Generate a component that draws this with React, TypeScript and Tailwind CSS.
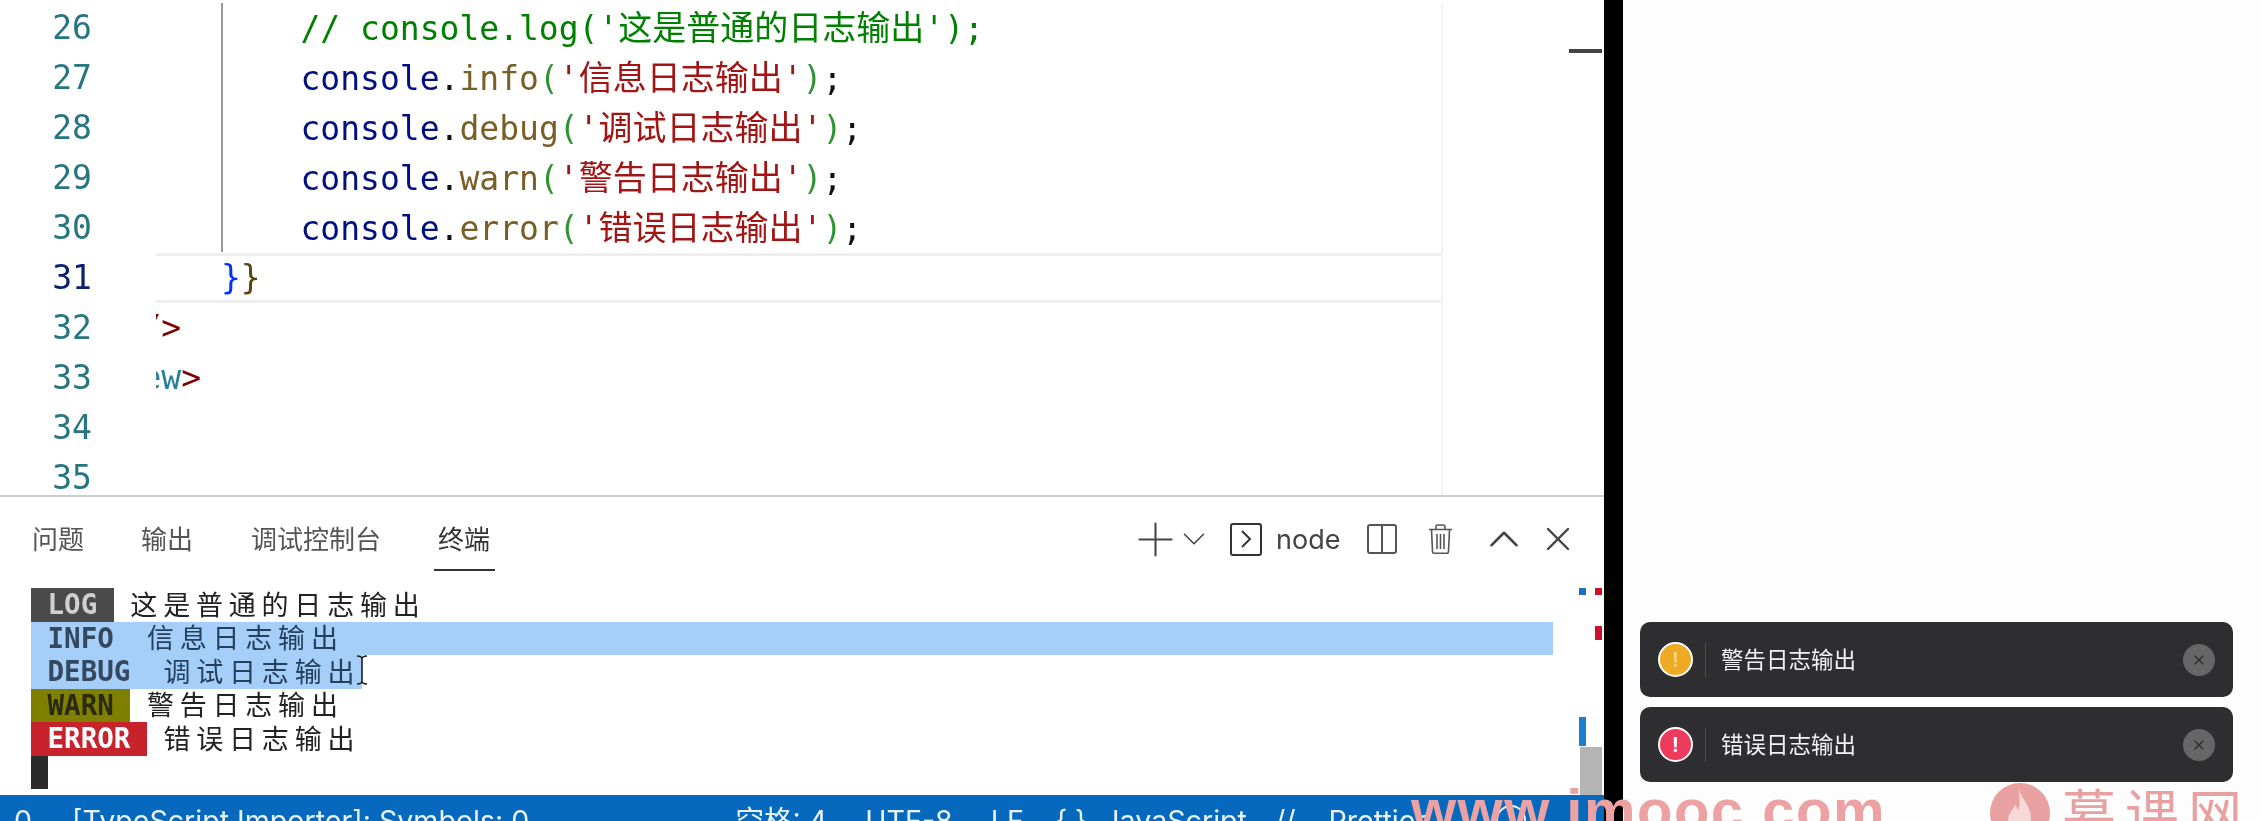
import React from "react";
import { ChevronDown, ChevronUp, Plus, X } from "lucide-react";

const MONO = "font-['DejaVu_Sans_Mono','Noto_Sans_CJK_SC',monospace]";
const SANS = "font-['Inter','Noto_Sans_CJK_SC',sans-serif]";

// one console.xxx('...') line of the editor
const CodeCall = ({ name, msg }: { name: string; msg: string }) => (
  <>
    {"        "}
    <span className="text-[#001080]">console</span>
    <span className="text-[#111]">.</span>
    <span className="text-[#795e26]">{name}</span>
    <span className="text-[#319331]">(</span>
    <span className="text-[#a31515]">
      '<span className="text-[34px]">{msg}</span>'
    </span>
    <span className="text-[#319331]">)</span>
    <span className="text-[#111]">;</span>
  </>
);

const lines: { no: number; body?: React.ReactNode }[] = [
  {
    no: 26,
    body: (
      <span className="text-[#008000]">
        {"        // console.log('"}
        <span className="text-[34px]">这是普通的日志输出</span>
        {"');"}
      </span>
    ),
  },
  { no: 27, body: <CodeCall name="info" msg="信息日志输出" /> },
  { no: 28, body: <CodeCall name="debug" msg="调试日志输出" /> },
  { no: 29, body: <CodeCall name="warn" msg="警告日志输出" /> },
  { no: 30, body: <CodeCall name="error" msg="错误日志输出" /> },
  {
    no: 31,
    body: (
      <>
        {"    "}
        <span className="text-[#0431fa]">{"}"}</span>
        <span className="text-[#5a4510]">{"}"}</span>
      </>
    ),
  },
  { no: 32, body: <span className="text-[#800000]">/&gt;</span> },
  {
    no: 33,
    body: (
      <>
        <span className="text-[#267f99]">ew</span>
        <span className="text-[#800000]">&gt;</span>
      </>
    ),
  },
  { no: 34 },
  { no: 35 },
];

const TermRow = ({
  tag,
  tagClass,
  msg,
  rowClass,
}: {
  tag: string;
  tagClass: string;
  msg: string;
  rowClass?: string;
}) => (
  <div className={`flex h-[33.6px] items-center whitespace-pre ${rowClass ?? ""}`}>
    <span className={`${MONO} h-full text-[27.5px] font-bold leading-[33.6px] ${tagClass}`}>{` ${tag} `}</span>
    <span className={`${MONO} text-[27.5px] leading-[33.6px]`}> </span>
    <span className={`${SANS} mt-[2px] text-[27px] tracking-[5.8px]`}>{msg}</span>
  </div>
);

const Toast = ({ color, mark, text }: { color: string; mark: string; text: string }) => (
  <div className="flex h-[75px] w-[593px] items-center rounded-[10px] bg-[#2e2e30] pl-[18px] pr-[18px]">
    <div
      className={`flex h-[35px] w-[35px] items-center justify-center rounded-full border-2 border-white text-[20px] font-bold ${color}`}
    >
      <span className={`${SANS} ${mark}`}>!</span>
    </div>
    <div className="ml-[12px] h-[34px] w-[1px] bg-[#4d4d4d]" />
    <div className={`${SANS} ml-[15px] text-[22.5px] text-[#f2f2f2]`}>{text}</div>
    <div className="ml-auto flex h-[32px] w-[32px] items-center justify-center rounded-full bg-[#666]">
      <X size={16} strokeWidth={2} className="text-[#2e2e2e]" />
    </div>
  </div>
);

export default function App() {
  return (
    <div className="relative flex h-[821px] w-[2261px] overflow-hidden bg-white blur-[0.5px]">
      {/* LEFT: VS CODE */}
      <div className="flex w-[1604px] flex-col">
        {/* EDITOR */}
        <div className="relative flex h-[497px] shrink-0 overflow-hidden border-b-2 border-[#ccc] pt-[3px]">
          <div className={`${MONO} w-[156px] shrink-0 text-[33px]`}>
            {lines.map((l) => (
              <div
                key={l.no}
                className={`h-[50px] pr-[64px] text-right leading-[50px] ${l.no === 31 ? "text-[#0b216f]" : "text-[#26757f]"}`}
              >
                {l.no}
              </div>
            ))}
          </div>
          <div className="relative flex-1 overflow-hidden">
            <div className={`${MONO} -ml-[14.5px] text-[33px]`}>
              {lines.map((l) => (
                <div key={l.no} className="relative h-[50px] whitespace-pre leading-[50px]">
                  {l.no === 31 && (
                    <div className="absolute bottom-0 left-0 top-0 w-[1301px] border-y-[3px] border-[#eeeeee]" />
                  )}
                  <span className="relative">{l.body}</span>
                </div>
              ))}
            </div>
            {/* indent guide */}
            <div className="absolute left-[65px] top-[-3px] h-[252px] w-[2px] bg-[#9a9a9a]" />
            {/* ruler and minimap mark */}
            <div className="absolute left-[1285px] top-[-3px] h-[500px] w-[2px] bg-[#f4f4f4]" />
            <div className="absolute left-[1413px] top-[46px] h-[4px] w-[33px] bg-[#444]" />
          </div>
        </div>

        {/* PANEL */}
        <div className="relative flex min-h-0 flex-1 flex-col">
          {/* TABS */}
          <div className={`${SANS} relative flex h-[74px] shrink-0 items-center pt-[10px] text-[26px] text-[#555]`}>
            <span className="ml-[32px]">问题</span>
            <span className="ml-[57px]">输出</span>
            <span className="ml-[58px]">调试控制台</span>
            <span className="ml-[57px] text-[#333]">终端</span>
            <div className="absolute left-[434px] top-[72px] h-[2px] w-[61px] bg-[#333]" />

            <div className="ml-auto mr-[26px] flex items-center text-[#444]">
              <Plus size={55} strokeWidth={0.9} />
              <ChevronDown size={38} strokeWidth={1} className="-ml-[8px]" />
              <div className="ml-[17px] flex h-[33px] w-[32px] items-center justify-center rounded-[3px] border-2 border-[#333]">
                <svg width="12" height="20" viewBox="0 0 12 20" fill="none" stroke="#333" strokeWidth="2">
                  <path d="M2 2l8 8-8 8" />
                </svg>
              </div>
              <span className="ml-[14px] w-[60px] text-[27px] leading-none">node</span>
              <div className="ml-[31px] flex h-[30px] w-[30px] rounded-[3px] border-2 border-[#555]">
                <div className="ml-[12px] w-[2px] bg-[#555]" />
              </div>
              <svg className="ml-[31px]" width="25" height="30" viewBox="0 0 25 30" fill="none" stroke="#555" strokeWidth="1.6">
                <path d="M8 5V2.5C8 1.5 8.7 1 9.5 1h6c.8 0 1.5.5 1.5 1.500V5M1 5.5h23M3.5 5.5l1 22c0 1 .7 1.700 1.500 1.700h13c.8 0 1.500-.7 1.500-1.700l1-22M9 10v15M12.500 10v15M16 10v15" />
              </svg>
              <ChevronUp size={50} strokeWidth={1.2} className="ml-[26px]" />
              <X size={40} strokeWidth={1.45} className="ml-[9px]" />
            </div>
          </div>

          {/* TERMINAL */}
          <div className="ml-[31px] mt-[17px] flex flex-col text-[#222]">
            <TermRow tag="LOG" tagClass="bg-[#4a4a4a] text-[#d0d0d0]" msg="这是普通的日志输出" />
            <TermRow
              tag="INFO"
              tagClass="text-[#34495f]"
              msg="信息日志输出"
              rowClass="w-[1522px] bg-[#a5cff9] text-[#24405c]"
            />
            <TermRow
              tag="DEBUG"
              tagClass="text-[#34495f]"
              msg="调试日志输出"
              rowClass="w-[331px] bg-[#a5cff9] text-[#24405c]"
            />
            <TermRow tag="WARN" tagClass="bg-[#808000] text-[#2b2b14]" msg="警告日志输出" />
            <TermRow tag="ERROR" tagClass="bg-[#c8232c] text-white" msg="错误日志输出" />
            <div className="h-[33px] w-[17px] bg-[#2b2b2b]" />
          </div>

          {/* text cursor */}
          <svg className="absolute left-[355px] top-[158px]" width="14" height="30" viewBox="0 0 14 30" fill="none" stroke="#222" strokeWidth="1.6">
            <path d="M2 1c3 0 5 1 5 3v22c0 2-2 3-5 3M12 1c-3 0-5 1-5 3M12 29c-3 0-5-1-5-3" />
          </svg>

          {/* overview ruler */}
          <div className="absolute left-[1579px] top-[91px] h-[7px] w-[7px] bg-[#1a6fc0]" />
          <div className="absolute left-[1595px] top-[91px] h-[7px] w-[7px] bg-[#d0102a]" />
          <div className="absolute left-[1595px] top-[129px] h-[14px] w-[7px] bg-[#d0102a]" />
          <div className="absolute left-[1579px] top-[220px] h-[29px] w-[7px] bg-[#1a7fd0]" />
          <div className="absolute left-[1580px] top-[250px] h-[48px] w-[22px] bg-[#b4b4b4]" />

          {/* STATUS BAR */}
          <div className={`${SANS} mt-auto h-[26px] shrink-0 overflow-hidden whitespace-pre bg-[#0669bd] text-[#e8f2fb]`}>
            <div className="flex pt-[10px] text-[28.6px] leading-[32px]">
              <span className="ml-[14px]">0</span>
              <span className="ml-[40px]">[TypeScript Importer]: Symbols: 0</span>
              <span className="ml-[206px]">空格: 4</span>
              <span className="ml-[38px]">UTF-8</span>
              <span className="ml-[38px]">LF</span>
              <span className="ml-[31px]">{"{ }"}</span>
              <span className="ml-[16px]">JavaScript</span>
              <span className="ml-[28px]">//</span>
              <span className="ml-[33px]">Prettier</span>
              <span className="ml-[70px] h-[30px] w-[30px] rounded-full border-2 border-[#e8f2fb]" />
            </div>
          </div>
        </div>
      </div>

      {/* BLACK DIVIDER */}
      <div className="w-[19px] shrink-0 bg-black" />

      {/* RIGHT: SIMULATOR */}
      <div className="flex flex-1 flex-col gap-[10px] bg-[#fdfdfd] pl-[17px] pt-[622px]">
        <Toast color="bg-[#edaa22]" mark="text-[#f5d27a]" text="警告日志输出" />
        <Toast color="bg-[#ee3a5c]" mark="text-white" text="错误日志输出" />
      </div>

      {/* WATERMARK */}
      <div className="absolute left-[1411px] top-[781px] whitespace-pre font-['Liberation_Sans',sans-serif] text-[58px] font-bold leading-[58px] tracking-[1.5px] text-[#eca2a2]">
        www.imooc.com
      </div>
      <div className="absolute left-[1990px] top-[783px] flex items-start">
        <svg width="60" height="60" viewBox="0 0 60 60">
          <circle cx="30" cy="30" r="30" fill="#e9a0a0" />
          <path d="M28 4c2 10 13 18 13 32 0 10-6 18-11 22-6-4-12-12-12-20 0-8 5-11 7-16 2 2 3 4 3 6 2-6 2-14 0-24z" fill="#f6d8d8" />
        </svg>
        <span className={`${SANS} ml-[12px] mt-[6px] whitespace-pre text-[54px] leading-[54px] tracking-[9px] text-[#e9a0a0]`}>慕课网</span>
      </div>
    </div>
  );
}
